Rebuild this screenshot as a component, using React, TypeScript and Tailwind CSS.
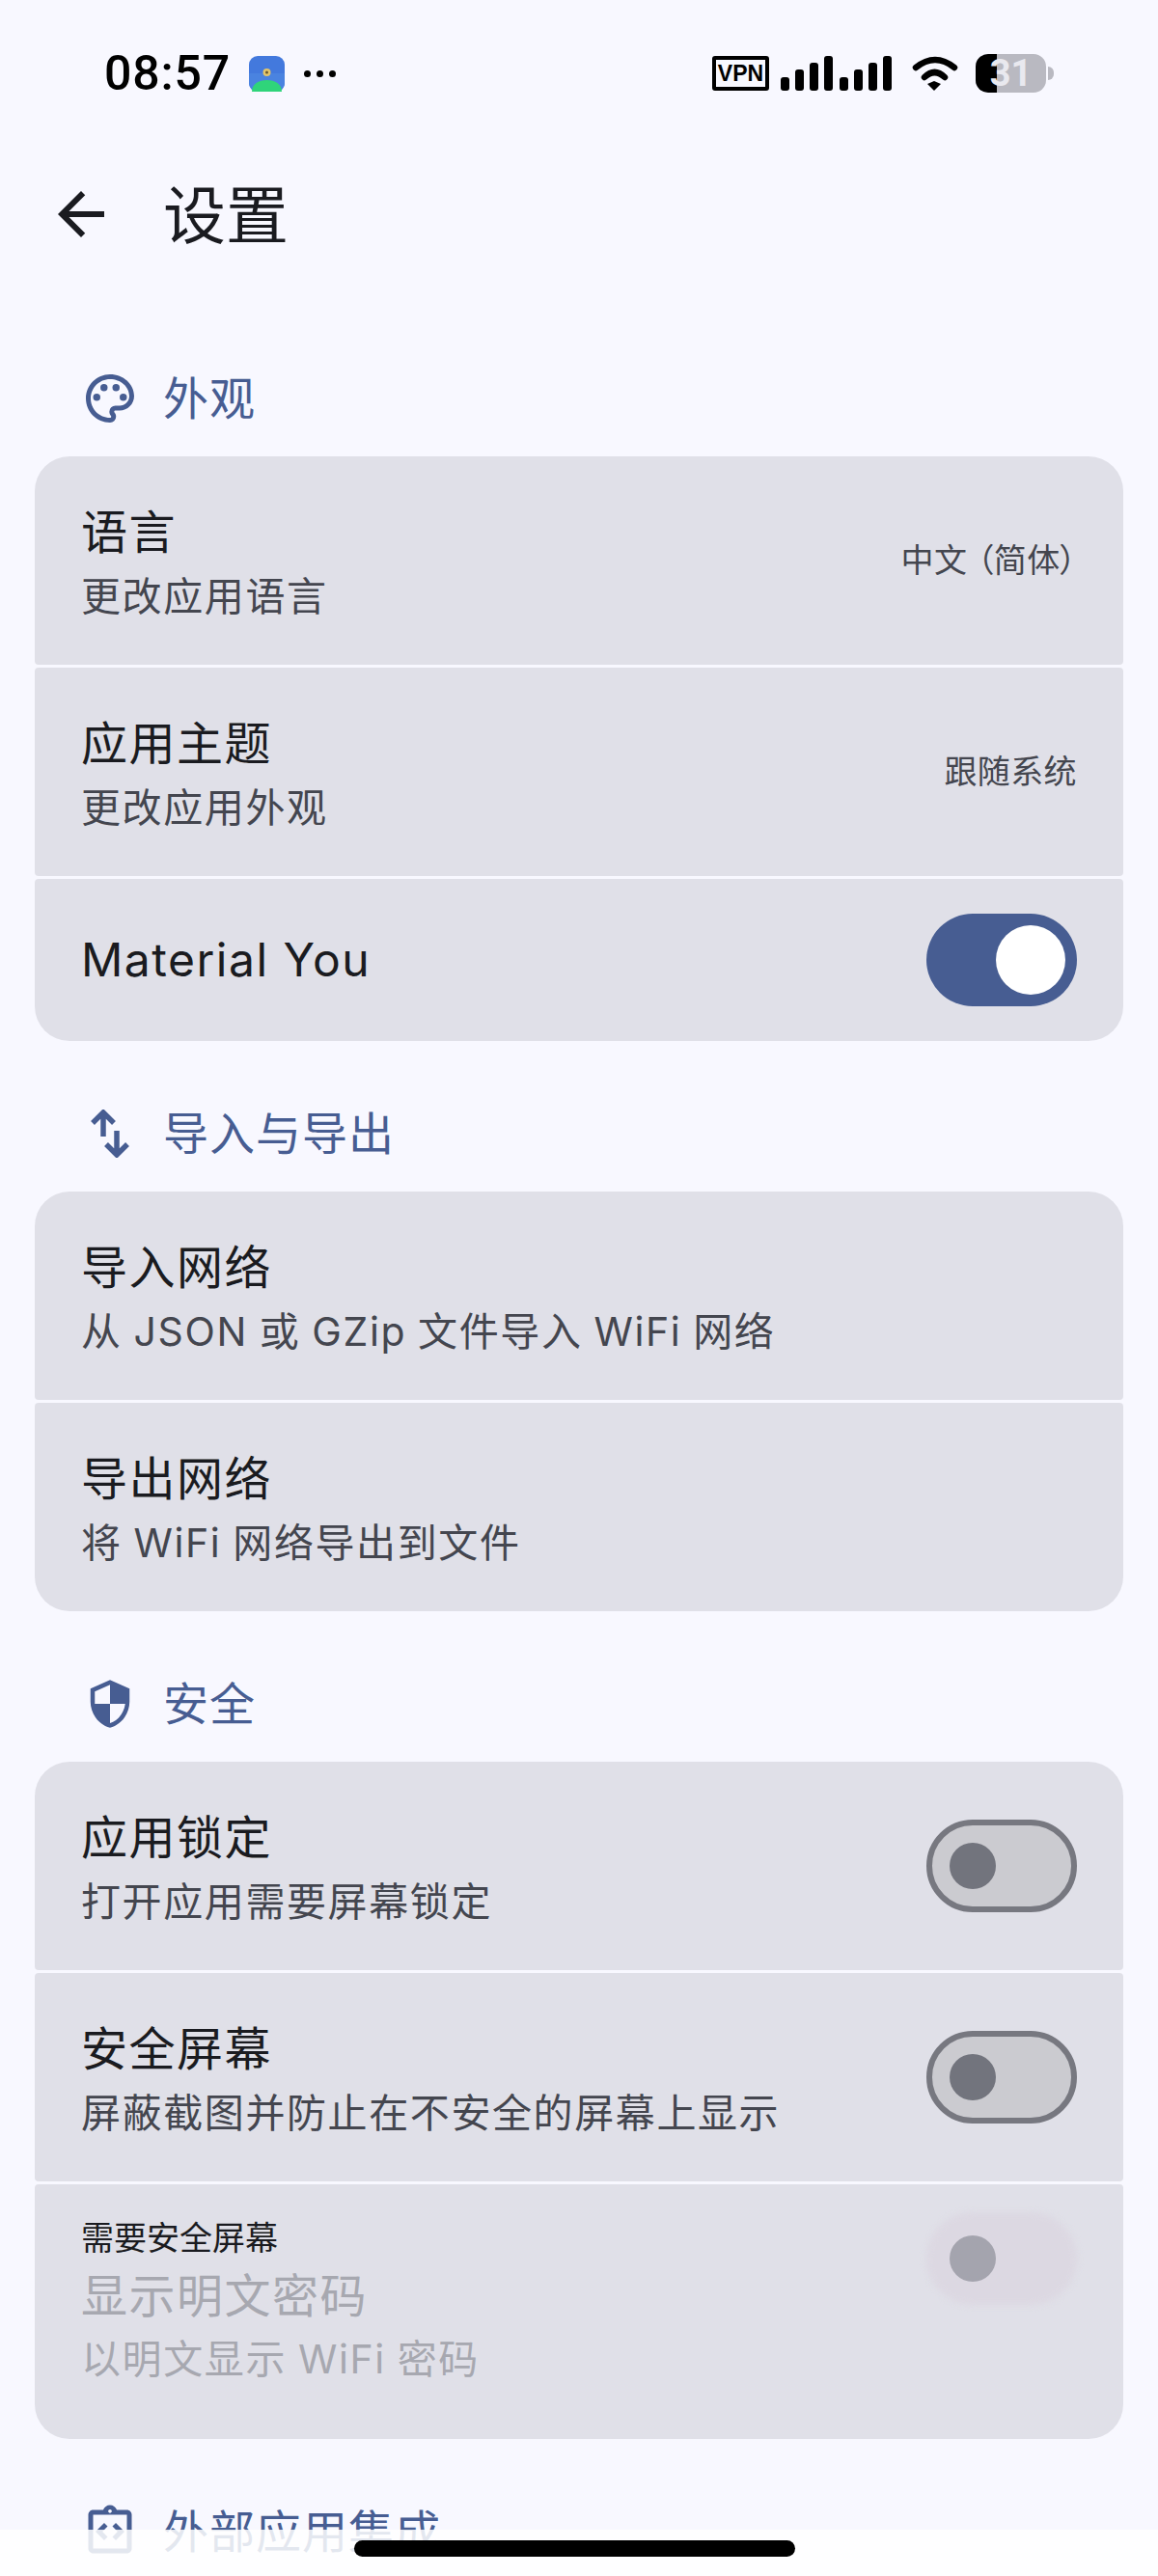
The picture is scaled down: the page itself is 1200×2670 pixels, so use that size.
import { ReactNode } from "react";
import { MdArrowBack, MdOutlineIntegrationInstructions, MdOutlinePalette, MdSecurity } from "react-icons/md";

function StatusBar() {
  return (
    <div className="flex h-[152px] items-center justify-between pl-[108px] pr-[108px] text-black">
      <div className="flex items-center">
        <span className="w-[128px] font-['Roboto',sans-serif] text-[50px] leading-none font-medium tracking-[0.8px]">08:57</span>
        <svg className="ml-[22px]" width="37" height="37" viewBox="0 0 37 37">
          <rect width="37" height="37" rx="9" fill="#4379dd" />
          <path d="M0 28V18H37V28C37 33 33 37 28 37H9C4 37 0 33 0 28Z" fill="#4a83e0" />
          <circle cx="18.5" cy="17" r="4" fill="#e3c56a" />
          <circle cx="18.5" cy="17" r="1.5" fill="#6a5a30" />
          <path d="M3 37C3 29 10 25 18.5 25S34 29 34 37Z" fill="#2fd47a" />
        </svg>
        <div className="ml-[20px] flex items-center gap-[6px]">
          <div className="h-[7px] w-[7px] rounded-full bg-black" />
          <div className="h-[7px] w-[7px] rounded-full bg-black" />
          <div className="h-[7px] w-[7px] rounded-full bg-black" />
        </div>
      </div>
      <div className="flex items-center">
        <div className="flex h-[36px] w-[59px] items-center justify-center rounded-[3px] border-[4px] border-black font-['Liberation_Sans',sans-serif] text-[23px] font-bold">
          VPN
        </div>
        <svg className="ml-[12px]" width="115" height="36" viewBox="0 0 115 36">
          <rect x="0" y="22" width="9" height="14" rx="3" />
          <rect x="15" y="14" width="9" height="22" rx="3" />
          <rect x="30" y="7" width="9" height="29" rx="3" />
          <rect x="45" y="0" width="9" height="36" rx="3" />
          <rect x="61" y="22" width="9" height="14" rx="3" />
          <rect x="76" y="14" width="9" height="22" rx="3" />
          <rect x="91" y="7" width="9" height="29" rx="3" />
          <rect x="106" y="0" width="9" height="36" rx="3" />
        </svg>
        <svg className="ml-[21px]" width="48" height="36" viewBox="0 0 48 36" fill="none" stroke="black" strokeWidth="6.5" strokeLinecap="round">
          <path d="M4 12Q24 -4 44 12" />
          <path d="M13 22Q23.5 12 34 22" />
          <path d="M16 29L23 26L30 29L23 36Z" fill="black" stroke="none" />
        </svg>
        <div className="relative ml-[18px] flex h-[40px] w-[73px] items-center justify-center rounded-[13px] bg-[#b9b9c1]">
          <div className="absolute inset-y-0 left-0 w-[22px] rounded-l-[13px] bg-black" />
          <span className="relative font-['Roboto',sans-serif] text-[38px] leading-none font-bold text-[#e9e9ef]">31</span>
        </div>
        <div className="ml-[2px] h-[14px] w-[6px] rounded-r-full bg-[#b9b9c1]" />
      </div>
    </div>
  );
}

function SectionHeader({ icon, title }: { icon: ReactNode; title: string }) {
  return (
    <div className="flex items-center pt-[66px] pb-[30px] pl-[84px] text-[#475d92]">
      <div className="flex h-[60px] w-[60px] items-center justify-center">{icon}</div>
      <span className="ml-[25px] text-[47px] leading-[60px] tracking-[1px]">{title}</span>
    </div>
  );
}

function Switch({ on, disabled }: { on?: boolean; disabled?: boolean }) {
  if (on) {
    return (
      <div className="flex h-[96px] w-[156px] shrink-0 items-center justify-end rounded-full bg-[#475d92] pr-[12px]">
        <div className="h-[72px] w-[72px] rounded-full bg-white" />
      </div>
    );
  }
  if (disabled) {
    return (
      <div className="relative mt-[29px] flex h-[96px] w-[156px] shrink-0 items-center self-start pl-[24px]">
        <div className="absolute inset-0 rounded-full bg-[#dcd8e2] blur-[3px]" />
        <div className="relative h-[48px] w-[48px] rounded-full bg-[#a4a4ae]" />
      </div>
    );
  }
  return (
    <div className="flex h-[96px] w-[156px] shrink-0 items-center rounded-full border-[6px] border-[#777880] bg-[#cbcbd0] pl-[18px]">
      <div className="h-[48px] w-[48px] rounded-full bg-[#72747d]" />
    </div>
  );
}

function Row({ title, sub, value, toggle }: { title: string; sub?: string; value?: ReactNode; toggle?: ReactNode }) {
  return (
    <div className={`flex items-center justify-between rounded-[4px] bg-[#e0e0e8] pr-[48px] pl-[48px] ${sub ? "h-[216px]" : "h-[168px]"}`}>
      <div className={`flex flex-col ${sub ? "pt-[7px]" : ""}`}>
        <span className="text-[48px] leading-[66px] tracking-[1.5px] text-[#1a1b20]">{title}</span>
        {sub && <span className="text-[41px] leading-[66px] tracking-[1.6px] text-[#44464f] [word-spacing:-1.2px]">{sub}</span>}
      </div>
      {value && <span className="text-[34px] leading-none tracking-[0.4px] text-[#44464f] [font-feature-settings:'palt']">{value}</span>}
      {toggle}
    </div>
  );
}

function Card({ children }: { children: ReactNode }) {
  return <div className="mx-[36px] flex flex-col gap-[3px] overflow-hidden rounded-[36px]">{children}</div>;
}

export default function App() {
  return (
    <div className="relative h-[2670px] w-[1200px] overflow-hidden bg-[#f8f8ff] font-['Inter','Noto_Sans_CJK_SC',sans-serif]">
      <StatusBar />
      <div className="flex h-[140px] items-center pl-[48px] text-[#1a1b20]">
        <MdArrowBack size={72} />
        <span className="mt-[2px] ml-[49px] text-[65px] leading-none">设置</span>
      </div>
      <div className="pt-[25px]">
        <SectionHeader icon={<MdOutlinePalette size={60} />} title="外观" />
        <Card>
          <Row title="语言" sub="更改应用语言" value={<>中文<span className="ml-[10px]">（简体）</span></>} />
          <Row title="应用主题" sub="更改应用外观" value="跟随系统" />
          <Row title="Material You" toggle={<Switch on />} />
        </Card>
        <SectionHeader
          icon={
            <svg width="40" height="50" viewBox="0 0 40 50" fill="none" stroke="currentColor" strokeWidth="5.5">
              <path d="M2 14L13 3L24 14M13 3V28" />
              <path d="M16 36L27 47L38 36M27 47V22" />
            </svg>
          }
          title="导入与导出"
        />
        <Card>
          <Row title="导入网络" sub="从 JSON 或 GZip 文件导入 WiFi 网络" />
          <Row title="导出网络" sub="将 WiFi 网络导出到文件" />
        </Card>
        <SectionHeader icon={<MdSecurity size={54} />} title="安全" />
        <Card>
          <Row title="应用锁定" sub="打开应用需要屏幕锁定" toggle={<Switch />} />
          <Row title="安全屏幕" sub="屏蔽截图并防止在不安全的屏幕上显示" toggle={<Switch />} />
          <div className="flex h-[264px] justify-between rounded-[4px] bg-[#e0e0e8] pr-[48px] pl-[48px]">
            <div className="flex flex-col pt-[33px]">
              <span className="text-[34px] leading-[46px] text-[#1a1b20]">需要安全屏幕</span>
              <span className="mt-[4px] text-[48px] leading-[66px] tracking-[1.5px] text-[#a7a8b0]">显示明文密码</span>
              <span className="text-[41px] leading-[64px] tracking-[1.6px] text-[#a7a8b0] [word-spacing:-1.2px]">以明文显示 WiFi 密码</span>
            </div>
            <Switch disabled />
          </div>
        </Card>
        <SectionHeader icon={<MdOutlineIntegrationInstructions size={60} />} title="外部应用集成" />
      </div>
      <div className="absolute inset-x-0 bottom-0 h-[48px] bg-white/85">
        <div className="absolute top-[11px] left-[367px] h-[17px] w-[457px] rounded-full bg-black" />
      </div>
    </div>
  );
}
